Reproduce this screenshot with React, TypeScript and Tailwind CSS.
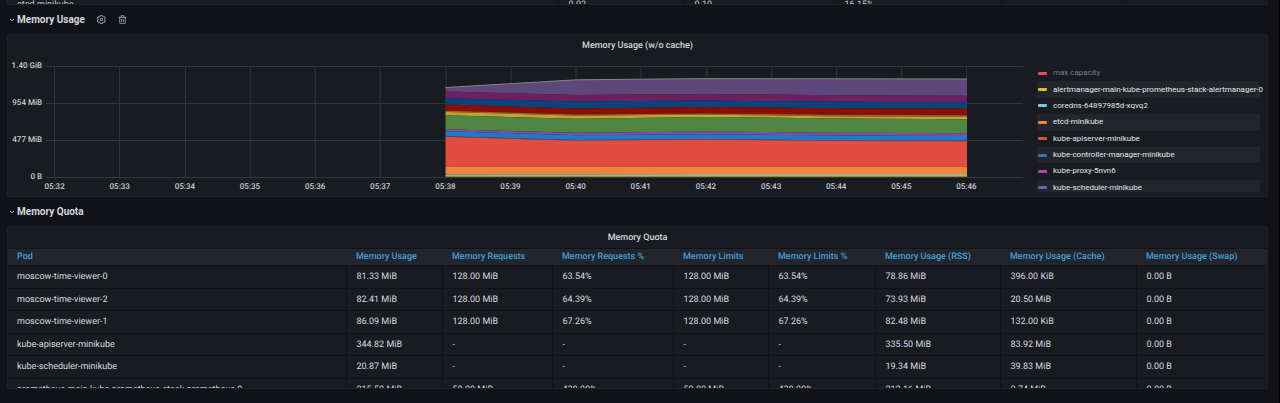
import React from "react";
import { ChevronDown } from "lucide-react";

type Series = { name: string; swatch: string; muted?: boolean };
type Band = { fill: string; top: number[]; bottom: number[] };

const legend: Series[] = [
  { name: "max capacity", swatch: "bg-[#f2495c]", muted: true },
  { name: "alertmanager-main-kube-prometheus-stack-alertmanager-0", swatch: "bg-[#eab839]" },
  { name: "coredns-64897985d-xqvq2", swatch: "bg-[#6ed0e0]" },
  { name: "etcd-minikube", swatch: "bg-[#ef843c]" },
  { name: "kube-apiserver-minikube", swatch: "bg-[#e24d42]" },
  { name: "kube-controller-manager-minikube", swatch: "bg-[#1f78c1]" },
  { name: "kube-proxy-5nvn6", swatch: "bg-[#ba43a9]" },
  { name: "kube-scheduler-minikube", swatch: "bg-[#705da0]" },
];

const yTicks = ["1.40 GiB", "954 MiB", "477 MiB", "0 B"];
const xTicks = [
  "05:32", "05:33", "05:34", "05:35", "05:36", "05:37", "05:38", "05:39",
  "05:40", "05:41", "05:42", "05:43", "05:44", "05:45", "05:46",
];

// Sample positions along the time axis, in plot units.
const sampleX = [400, 531, 661, 792, 922];

// Stack edges from top to bottom, in plot units below the upper grid line.
const edges: number[][] = [
  [21.5, 13.8, 12.6, 12.8, 13],
  [25.5, 29, 28, 29.2, 29.8],
  [32.3, 35.6, 34.6, 35.8, 36],
  [38.6, 42.5, 41, 42.2, 42.6],
  [44.8, 48.4, 47.4, 48.8, 49.2],
  [46, 49.8, 48.6, 50.4, 51],
  [49.2, 52.8, 51, 52.4, 53.2],
  [63.2, 66.8, 65.4, 66.8, 67.2],
  [65.2, 69.2, 68.2, 69.6, 70],
  [70.2, 74, 73, 74.4, 74.6],
  [70.8, 74.8, 73.6, 75, 75.2],
  [100.6, 100.8, 100.8, 100.8, 100.8],
  [108.4, 108.2, 108, 108, 108],
  [110.2, 110.2, 110.2, 110.2, 110.2],
  [111, 111, 111, 111, 111],
];
const fills = [
  "#5d477b", "#6d1f62", "#0a437c", "#890f02", "#99632f", "#c3a42a", "#508642",
  "#7b51a8", "#2378c5", "#70506a", "#e24d42", "#ef843c", "#a5b08c", "#b8a03c",
];
const bands: Band[] = fills.map((fill, i) => ({ fill, top: edges[i], bottom: edges[i + 1] }));

const polygon = (b: Band) =>
  [
    ...sampleX.map((x, i) => `${x},${b.top[i]}`),
    ...sampleX.map((x, i) => `${x},${b.bottom[i]}`).reverse(),
  ].join(" ");

const columns = [
  { label: "Pod", width: "w-[338px]" },
  { label: "Memory Usage", width: "w-[96px]" },
  { label: "Memory Requests", width: "w-[110px]" },
  { label: "Memory Requests %", width: "w-[121px]" },
  { label: "Memory Limits", width: "w-[95px]" },
  { label: "Memory Limits %", width: "w-[107px]" },
  { label: "Memory Usage (RSS)", width: "w-[125px]" },
  { label: "Memory Usage (Cache)", width: "w-[136px]" },
  { label: "Memory Usage (Swap)", width: "w-[132px]" },
];

const rows = [
  ["moscow-time-viewer-0", "81.33 MiB", "128.00 MiB", "63.54%", "128.00 MiB", "63.54%", "78.86 MiB", "396.00 KiB", "0.00 B"],
  ["moscow-time-viewer-2", "82.41 MiB", "128.00 MiB", "64.39%", "128.00 MiB", "64.39%", "73.93 MiB", "20.50 MiB", "0.00 B"],
  ["moscow-time-viewer-1", "86.09 MiB", "128.00 MiB", "67.26%", "128.00 MiB", "67.26%", "82.48 MiB", "132.00 KiB", "0.00 B"],
  ["kube-apiserver-minikube", "344.82 MiB", "-", "-", "-", "-", "335.50 MiB", "83.92 MiB", "0.00 B"],
  ["kube-scheduler-minikube", "20.87 MiB", "-", "-", "-", "-", "19.34 MiB", "39.83 MiB", "0.00 B"],
  ["prometheus-main-kube-prometheus-stack-prometheus-0", "215.59 MiB", "50.00 MiB", "430.90%", "50.00 MiB", "430.90%", "212.16 MiB", "2.74 MiB", "0.00 B"],
];

function CogIcon() {
  return (
    <svg viewBox="0 0 24 24" className="size-[11px] fill-current" aria-hidden="true">
      <path d="M19.9,12.66a1,1,0,0,1,0-1.32L21.18,9.9a1,1,0,0,0,.12-1.17l-2-3.46a1,1,0,0,0-1.07-.48l-1.88.38a1,1,0,0,1-1.15-.66l-.61-1.83A1,1,0,0,0,13.64,2h-4a1,1,0,0,0-1,.68L8.08,4.51a1,1,0,0,1-1.15.66L5,4.79A1,1,0,0,0,4,5.27L2,8.73A1,1,0,0,0,2.1,9.9l1.27,1.44a1,1,0,0,1,0,1.32L2.1,14.1A1,1,0,0,0,2,15.27l2,3.46a1,1,0,0,0,1.07.48l1.88-.38a1,1,0,0,1,1.15.66l.61,1.83a1,1,0,0,0,1,.68h4a1,1,0,0,0,.95-.68l.61-1.83a1,1,0,0,1,1.15-.66l1.88.38a1,1,0,0,0,1.07-.48l2-3.46a1,1,0,0,0-.12-1.17ZM18.41,14l.8.9-1.28,2.22-1.18-.24a3,3,0,0,0-3.45,2L12.92,20H10.36L10,18.86a3,3,0,0,0-3.45-2l-1.18.24L4.07,14.89l.8-.9a3,3,0,0,0,0-4l-.8-.9L5.35,6.89l1.18.24a3,3,0,0,0,3.45-2L10.36,4h2.56l.38,1.14a3,3,0,0,0,3.45,2l1.18-.24,1.28,2.22-.8.9A3,3,0,0,0,18.41,14ZM11.64,8a4,4,0,1,0,4,4A4,4,0,0,0,11.64,8Zm0,6a2,2,0,1,1,2-2A2,2,0,0,1,11.64,14Z" />
    </svg>
  );
}

function TrashIcon() {
  return (
    <svg viewBox="0 0 24 24" className="size-[11px] fill-current" aria-hidden="true">
      <path d="M10,18a1,1,0,0,0,1-1V11a1,1,0,0,0-2,0v6A1,1,0,0,0,10,18ZM20,6H16V5a3,3,0,0,0-3-3H11A3,3,0,0,0,8,5V6H4A1,1,0,0,0,4,8H5V19a3,3,0,0,0,3,3h8a3,3,0,0,0,3-3V8h1a1,1,0,0,0,0-2ZM10,5a1,1,0,0,1,1-1h2a1,1,0,0,1,1,1V6H10Zm7,14a1,1,0,0,1-1,1H8a1,1,0,0,1-1-1V8H17Zm-3-1a1,1,0,0,0,1-1V11a1,1,0,0,0-2,0v6A1,1,0,0,0,14,18Z" />
    </svg>
  );
}

function RowTitle({ title }: { title: string }) {
  return (
    <button type="button" className="flex items-center gap-[2px] text-[10px] leading-4 font-bold text-[#d5d6de]">
      <ChevronDown className="size-[6px]" strokeWidth={4} aria-hidden="true" />
      {title}
    </button>
  );
}

function PreviousTable() {
  return (
    <section className="h-[5px] overflow-hidden rounded-b-[2px] border-x border-b border-[#202226] bg-[#181b1f]">
      <table className="w-full table-fixed text-[9px] leading-[10px]">
        <tbody>
          <tr>
            <td className="w-[550px] border-r border-[#111217] pl-[9px]">etcd-minikube</td>
            <td className="w-[126px] border-r border-[#111217] pl-[10px]">0.02</td>
            <td className="w-[150px] border-r border-[#111217] pl-[10px]">0.10</td>
            <td className="w-[167px] border-r border-[#111217] pl-[10px]">16.15%</td>
            <td className="w-[124px] border-r border-[#111217]" />
            <td />
          </tr>
        </tbody>
      </table>
    </section>
  );
}

function MemoryChart() {
  return (
    <div className="min-w-0 flex-1">
      <div className="flex">
        <div className="flex w-[38px] flex-col justify-between pr-[4px] text-right text-[8px] leading-[12px] font-medium whitespace-nowrap">
          {yTicks.map((t) => (
            <span key={t}>{t}</span>
          ))}
        </div>
        <svg
          viewBox="0 -6 978 123"
          preserveAspectRatio="none"
          className="block h-[123px] min-w-0 flex-1"
          role="img"
          aria-label="Stacked memory usage by pod"
        >
          <g stroke="#33363b" strokeWidth="1" shapeRendering="crispEdges">
            {[0, 37, 74, 111].map((y) => (
              <line key={y} x1="0" x2="978" y1={y + 0.5} y2={y + 0.5} />
            ))}
            {xTicks.map((t, i) => {
              const x = Math.floor(8.6 + i * 65.24) + 0.5;
              return <line key={t} x1={x} x2={x} y1="0" y2="111" />;
            })}
          </g>
          {bands.map((b) => (
            <polygon key={b.fill} points={polygon(b)} fill={b.fill} />
          ))}
          <polyline
            points={sampleX.map((x, i) => `${x},${edges[0][i]}`).join(" ")}
            fill="none"
            stroke="#82897f"
            strokeWidth="1"
          />
        </svg>
      </div>
      <div className="-mt-[2px] grid grid-cols-15 pr-[24px] pl-[14px] text-center text-[8px] leading-[12px] font-medium">
        {xTicks.map((t) => (
          <span key={t}>{t}</span>
        ))}
      </div>
    </div>
  );
}

function Legend() {
  return (
    <div className="mt-[5px] h-[127px] w-[223px] shrink-0 overflow-y-clip">
      <ul className="flex h-[131px] flex-col">
        {legend.map((s) => (
          <li key={s.name} className="flex flex-1 even:bg-[#22252b]">
            <button type="button" className="flex w-full items-center gap-[6px] pl-[1px] text-left text-[8px] leading-[12px] whitespace-nowrap">
              <span className={`h-[3px] w-[9px] shrink-0 rounded-[1px] ${s.swatch}`} />
              <span className={s.muted ? "text-[#7d7f87]" : "text-[#e4e5ec]"}>{s.name}</span>
            </button>
          </li>
        ))}
      </ul>
    </div>
  );
}

function QuotaTable() {
  return (
    <table className="w-full table-fixed border-collapse text-left text-[9px] leading-[14px] whitespace-nowrap text-[#d8d9e4]">
      <thead>
        <tr className="h-[17px] border-y border-[#111217] bg-[#22252b] text-[#439fdb]">
          {columns.map((c) => (
            <th key={c.label} scope="col" className={`p-0 pl-[10px] font-medium first:pl-[9px] ${c.width}`}>
              {c.label}
            </th>
          ))}
        </tr>
      </thead>
      <tbody>
        {rows.map((r) => (
          <tr key={r[0]} className="h-[22px] border-b border-[#111217] odd:h-[23px]">
            {r.map((v, i) => (
              <td key={i} className="border-r border-[#111217] p-0 pl-[10px] first:pl-[9px] last:border-r-0">
                {v}
              </td>
            ))}
          </tr>
        ))}
      </tbody>
    </table>
  );
}

export default function App() {
  return (
    <main className="min-h-screen overflow-hidden border-r border-black bg-[#111217] pr-[11px] pl-[7px] font-['Roboto',sans-serif] text-[#ccccdc] [text-rendering:geometricPrecision]">
      <PreviousTable />
      <header className="flex h-[29px] items-center gap-[10px] pl-[2px]">
        <RowTitle title="Memory Usage" />
        <button type="button" aria-label="Row options" className="ml-[1px] text-[#9a9ba3]">
          <CogIcon />
        </button>
        <button type="button" aria-label="Delete row" className="text-[#9a9ba3]">
          <TrashIcon />
        </button>
      </header>
      <section className="h-[163px] overflow-hidden rounded-[2px] border border-[#202226] bg-[#181b1f]">
        <h2 className="pt-[4px] text-center text-[9px] leading-[14px] font-medium text-[#d5d6de]">Memory Usage (w/o cache)</h2>
        <div className="mt-[7px] flex gap-[14px] pr-[7px]">
          <MemoryChart />
          <Legend />
        </div>
      </section>
      <header className="flex h-[29px] items-center pl-[2px]">
        <RowTitle title="Memory Quota" />
      </header>
      <section className="h-[163px] overflow-hidden rounded-[2px] border border-[#202226] bg-[#181b1f]">
        <h2 className="pt-[4px] pb-[3px] text-center text-[9px] leading-[14px] font-medium text-[#d5d6de]">Memory Quota</h2>
        <QuotaTable />
      </section>
    </main>
  );
}
